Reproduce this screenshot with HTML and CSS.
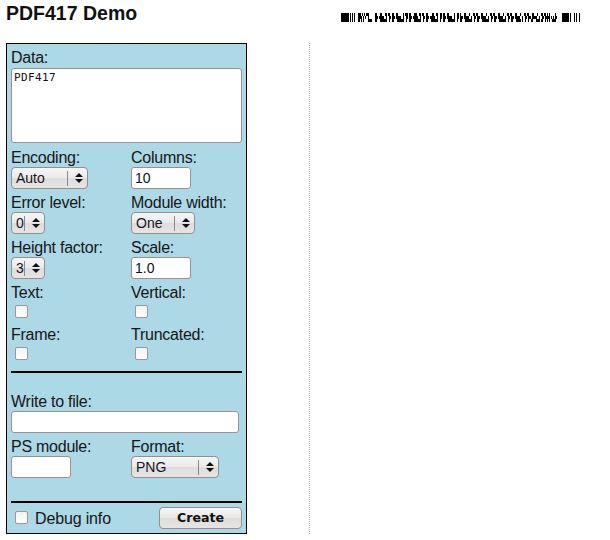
FILE: index.html
```html
<!DOCTYPE html>
<html lang="en">
<head>
<meta charset="utf-8">
<title>PDF417 Demo</title>
<link rel="stylesheet" href="styles.css">
</head>
<body>
<div class="page">
  <div class="left">
    <h1>PDF417 Demo</h1>
    <form class="panel">
      <div class="field data"><label>Data:</label><textarea spellcheck="false">PDF417</textarea></div>
      <div class="grid">
        <div class="field"><label>Encoding:</label><div class="select enc"><span>Auto</span><i></i><svg viewBox="0 0 8 10"><path d="M4 0 8 4H0zM0 6h8L4 10z"/></svg></div></div>
        <div class="field"><label>Columns:</label><input class="short" value="10"></div>
        <div class="field"><label>Error level:</label><div class="select digit"><span>0</span><i></i><svg viewBox="0 0 8 10"><path d="M4 0 8 4H0zM0 6h8L4 10z"/></svg></div></div>
        <div class="field"><label>Module width:</label><div class="select mod"><span>One</span><i></i><svg viewBox="0 0 8 10"><path d="M4 0 8 4H0zM0 6h8L4 10z"/></svg></div></div>
        <div class="field"><label>Height factor:</label><div class="select digit"><span>3</span><i></i><svg viewBox="0 0 8 10"><path d="M4 0 8 4H0zM0 6h8L4 10z"/></svg></div></div>
        <div class="field"><label>Scale:</label><input class="short" value="1.0"></div>
        <div class="field check"><label>Text:</label><input type="checkbox"></div>
        <div class="field check"><label>Vertical:</label><input type="checkbox"></div>
        <div class="field check"><label>Frame:</label><input type="checkbox"></div>
        <div class="field check"><label>Truncated:</label><input type="checkbox"></div>
      </div>
      <hr>
      <div class="grid output">
        <div class="field wide"><label>Write to file:</label><input class="file"></div>
        <div class="field"><label>PS module:</label><input class="short"></div>
        <div class="field"><label>Format:</label><div class="select fmt"><span>PNG</span><i></i><svg viewBox="0 0 8 10"><path d="M4 0 8 4H0zM0 6h8L4 10z"/></svg></div></div>
      </div>
      <hr>
      <div class="actions"><input type="checkbox"><label>Debug info</label><button type="button">Create</button></div>
    </form>
  </div>
  <div class="right"><svg id="barcode" width="239" height="9" viewBox="0 0 239 9"></svg></div>
</div>
<script src="barcode.js"></script>
</body>
</html>
```
FILE: styles.css
```css
* { box-sizing: border-box; }
body { margin: 0; background: #fff; color: #161616; font: 16px/18px "Liberation Sans", Arial, sans-serif; }
.page { display: flex; height: 540px; padding-left: 6px; overflow: hidden; }
.left { width: 303px; }
h1 { margin: 0; padding-top: 2px; height: 43px; color: #111; font-size: 19.5px; line-height: 23px; }
.panel { width: 241px; height: 491px; padding: 5px 4px 0; border: 1px solid #000; background: #add8e6; }
label { display: block; height: 18px; white-space: nowrap; letter-spacing: -.25px; }
input, textarea, button { margin: 0; font-family: inherit; color: #111; outline: 0; }
textarea, input:not([type=checkbox]) { display: block; border: 1px solid #999090; border-radius: 3px; background: #fff; }
textarea { width: 231px; height: 75px; margin-top: 1px; padding: 2px; resize: none; font: 11px/13px "DejaVu Sans Mono", monospace; letter-spacing: .38px; }
input:not([type=checkbox]) { width: 60px; height: 22px; padding: 0 3px; font-size: 14px; }
.grid { display: grid; grid-template-columns: 120px 111px; margin-top: 6px; }
.field { height: 45px; }
.field.data { height: 94px; }
.field.check { height: 42px; }
.wide { grid-column: span 2; }
.wide .file { width: 228px; }
.select { display: flex; align-items: center; height: 22px; padding: 0 4px; border: 1px solid #928f8d; border-radius: 4px; background: linear-gradient(#f5f5f5, #eaeaea 50%, #dedddc 52%, #e6e5e4); font-size: 14px; }
.select span { flex: 1; }
.select i { width: 1px; height: 15px; background: #8b8b8b; }
.select svg { width: 8px; height: 10px; margin-left: 7px; fill: #111; }
.enc { width: 77px; }
.mod { width: 64px; }
.fmt { width: 88px; }
.digit { width: 34px; }
input[type=checkbox] { appearance: none; display: block; width: 13px; height: 13px; margin: 3px 0 0 4px; border: 1px solid #999; border-radius: 2px; background: linear-gradient(#f2f2f2, #fff); }
hr { height: 2px; margin: 3px 0 0; border: 0; background: #000; }
.output { margin-top: 20px; }
.output + hr { margin-top: 18px; }
.actions { display: flex; height: 30px; }
.actions input[type=checkbox] { margin-top: 8px; }
.actions label { margin: 7px 0 0 7px; letter-spacing: -.15px; }
button { margin-left: auto; width: 83px; height: 22px; margin-top: 4px; padding: 0; border: 1px solid #928f8d; border-radius: 4px; background: linear-gradient(#f5f5f5, #e8e8e8 50%, #dedddc 52%, #e6e5e4); font: bold 12.6px/18px "DejaVu Sans", sans-serif; }
.right { width: 301px; padding: 13px 0 0 32px; background: repeating-linear-gradient(#aaa 0 1px, transparent 1px 2px) 0 43px / 1px 491px no-repeat; }
#barcode { display: block; shape-rendering: crispEdges; }
```
FILE: barcode.js
```js
const start = '11111111010101000';
const stop = '111111101000101001';
const pad = ['10001100010001101', '11101111100100110', '11000111111100100'];
const rows = [
  ['11101010111000000', '11000110001101100', '11001100000101110', '11000111001101100', '11000011001100110', '11001100000100110', pad[0], pad[0], pad[0], pad[0], pad[0], '10101000001000000'],
  ['11110101001000000', pad[1], pad[1], pad[1], pad[1], pad[1], pad[1], pad[1], pad[1], pad[1], pad[1], '11111010101100000'],
  ['11010100001111000', pad[2], pad[2], pad[2], pad[2], pad[2], pad[2], pad[2], pad[2], '11000111110100100', '10011000111101100', '10101001111000000']
];
const svg = document.getElementById('barcode');
rows.forEach((row, y) => {
  const bits = start + row.join('') + stop;
  for (const run of bits.matchAll(/1+/g)) {
    const rect = document.createElementNS('http://www.w3.org/2000/svg', 'rect');
    rect.setAttribute('x', run.index);
    rect.setAttribute('y', y * 3);
    rect.setAttribute('width', run[0].length);
    rect.setAttribute('height', 3);
    svg.appendChild(rect);
  }
});
```
